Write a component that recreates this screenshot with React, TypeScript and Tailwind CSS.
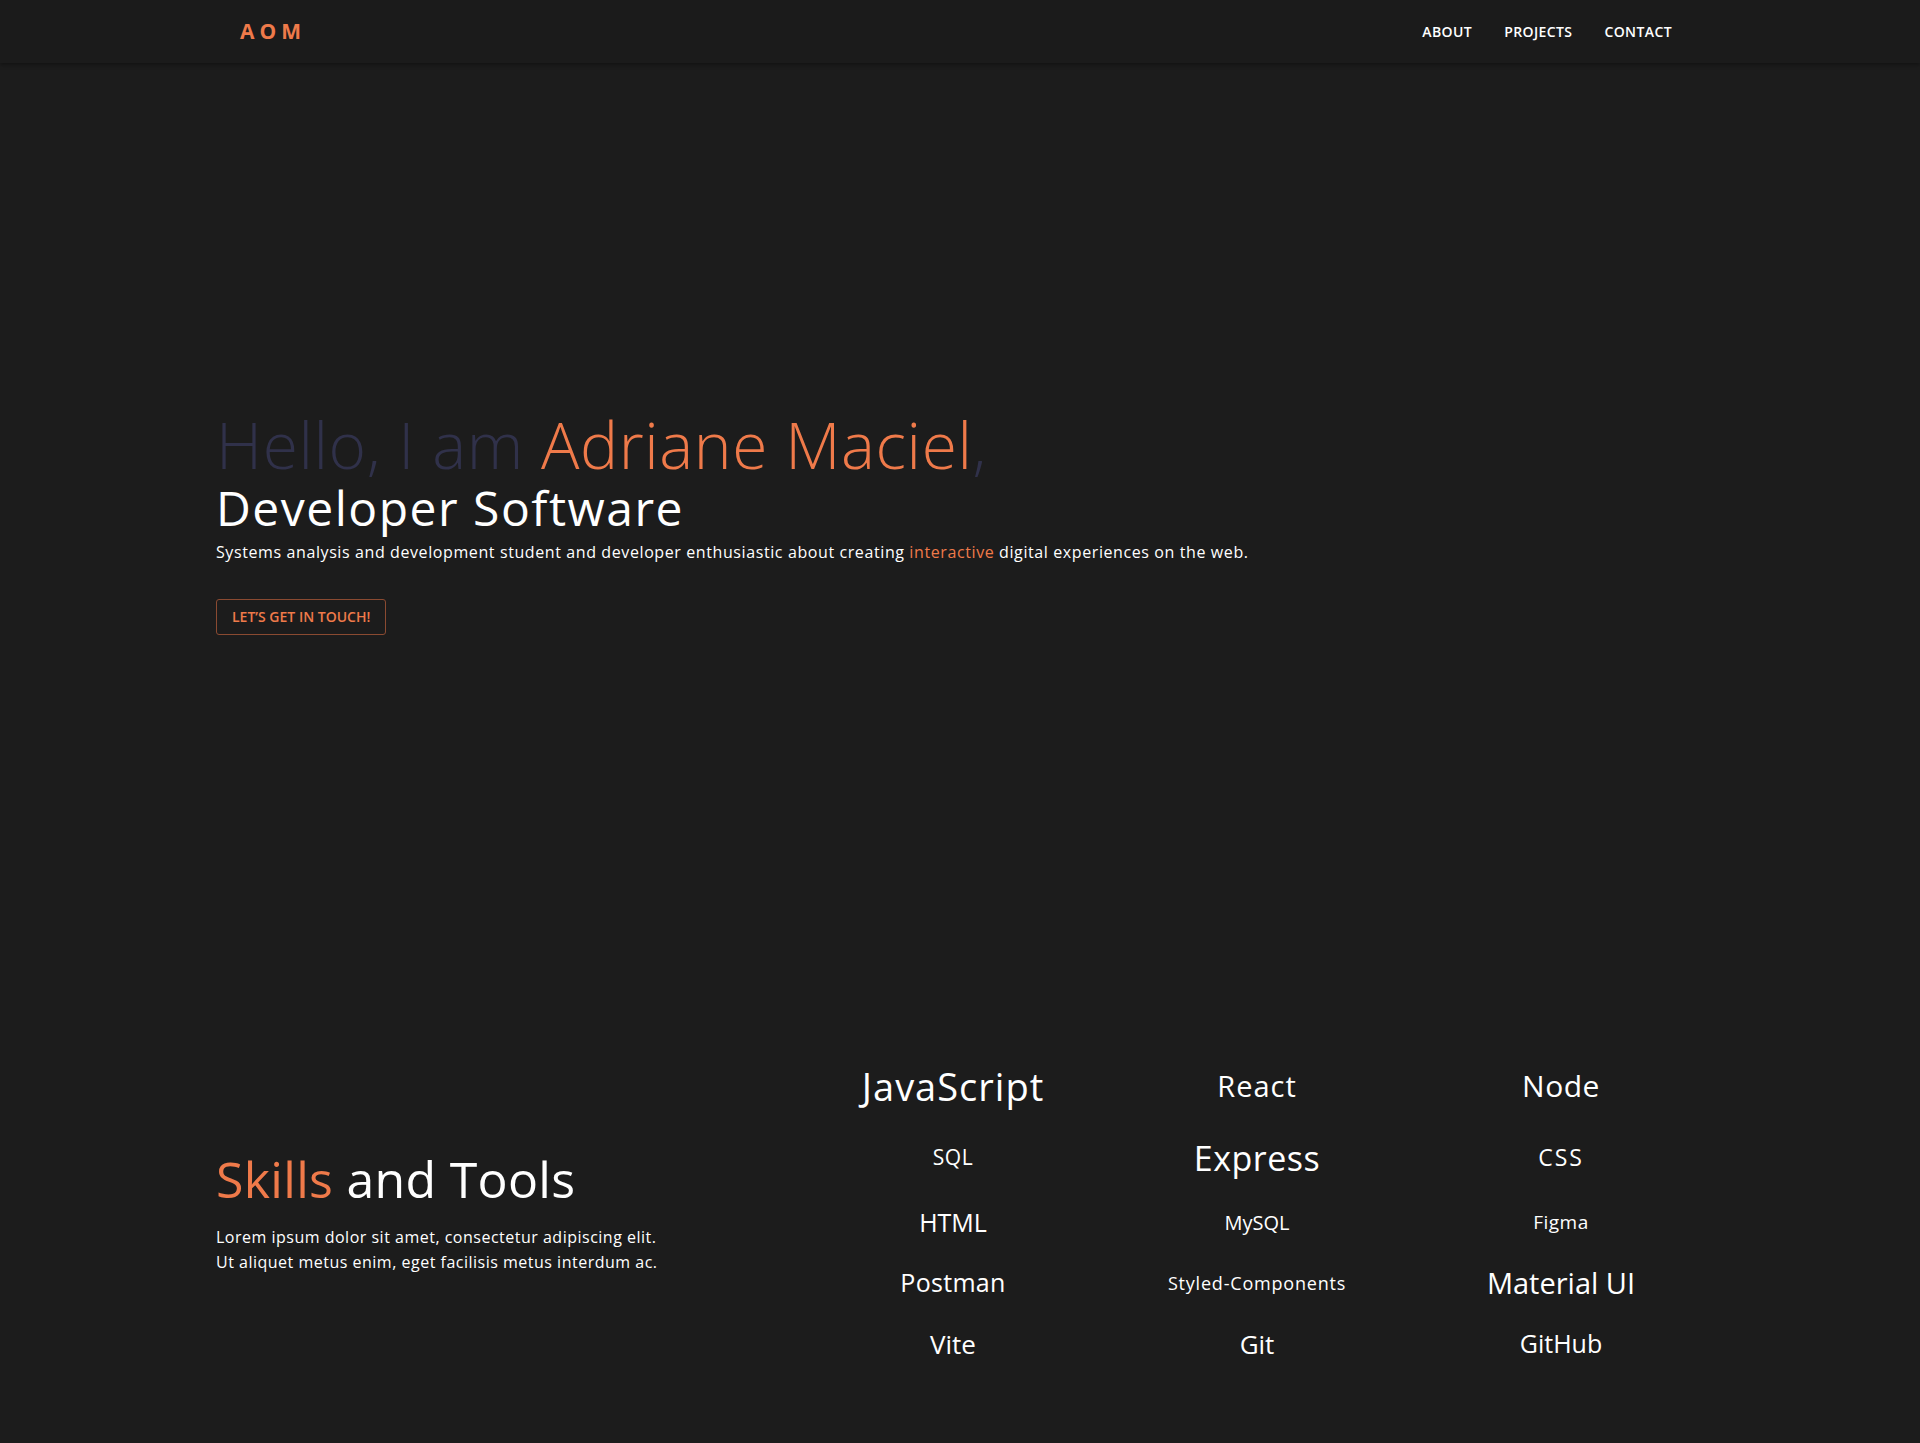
const skills = [
  { name: "JavaScript", size: "text-[38px] tracking-[1px]" },
  { name: "React", size: "text-[29px] tracking-[1px]" },
  { name: "Node", size: "text-[30px] tracking-[0.5px]" },
  { name: "SQL", size: "text-[21px] tracking-[0.5px]" },
  { name: "Express", size: "text-[34px] tracking-[0.5px]" },
  { name: "CSS", size: "text-[23px] tracking-[2px]" },
  { name: "HTML", size: "text-[25px]" },
  { name: "MySQL", size: "text-[20px]" },
  { name: "Figma", size: "text-[19px] tracking-[0.5px]" },
  { name: "Postman", size: "text-[25px] tracking-[0.3px]" },
  { name: "Styled-Components", size: "text-[18px] tracking-[0.8px]" },
  { name: "Material UI", size: "text-[29px]" },
  { name: "Vite", size: "text-[26px]" },
  { name: "Git", size: "text-[26px]" },
  { name: "GitHub", size: "text-[25px]" },
];

const Header = () => {
  return (
    <header className="h-[63px] bg-[#1b1b1b] shadow-[0_2px_4px_rgba(0,0,0,0.35)] relative z-10">
      <div className="w-[1488px] mx-auto h-full flex items-center justify-between pl-[24px] pr-[32px]">
        <span className="text-[21px] font-bold tracking-[0.24em] text-[#ef7a4a]">AOM</span>
        <nav className="flex items-center gap-[32px] text-[14px] tracking-[0.4px] font-semibold text-white">
          <a href="#about">ABOUT</a>
          <a href="#projects">PROJECTS</a>
          <a href="#contact">CONTACT</a>
        </nav>
      </div>
    </header>
  );
};

const Hero = () => {
  return (
    <section className="h-[917px] flex items-center">
      <div className="w-[1488px] mx-auto flex flex-col">
        <h1 className="text-[64px] font-light leading-[1.15] tracking-[0.6px] text-[#30314a]">
          Hello, I am <span className="text-[#ef7a4a]">Adriane Maciel</span>,
        </h1>
        <h2 className="text-[48px] leading-[1.1] tracking-[1.5px] text-white">Developer Software</h2>
        <p className="text-[16px] tracking-[0.6px] text-white mt-[5px]">
          Systems analysis and development student and developer enthusiastic about creating{" "}
          <span className="text-[#ef7a4a]">interactive</span> digital experiences on the web.
        </p>
        <button className="mt-[35px] self-start h-[36px] px-[15px] border border-[#8a4a31] rounded-[3px] text-[14px] font-semibold text-[#ef7a4a]">
          LET’S GET IN TOUCH!
        </button>
      </div>
    </section>
  );
};

const Skills = () => {
  return (
    <section className="h-[463px] flex items-center">
      <div className="w-[1497px] ml-[216px] flex items-center justify-between">
        <div className="flex flex-col">
          <h2 className="text-[50px] leading-[1.2] tracking-[0.3px] text-white">
            <span className="text-[#ef7a4a]">Skills</span> and Tools
          </h2>
          <p className="mt-[16px] text-[16px] leading-[25px] tracking-[0.5px] text-white">
            Lorem ipsum dolor sit amet, consectetur adipiscing elit.
            <br />
            Ut aliquet metus enim, eget facilisis metus interdum ac.
          </p>
        </div>
        <div className="w-[912px] grid grid-cols-3 grid-rows-[72px_72px_58px_62px_60px] items-center justify-items-center text-white">
          {skills.map((s) => (
            <span key={s.name} className={`${s.size} leading-none`}>
              {s.name}
            </span>
          ))}
        </div>
      </div>
    </section>
  );
};

export default function App() {
  return (
    <div className="min-h-screen bg-[#1c1c1c] font-['Open_Sans',sans-serif]">
      <Header />
      <Hero />
      <Skills />
    </div>
  );
}
